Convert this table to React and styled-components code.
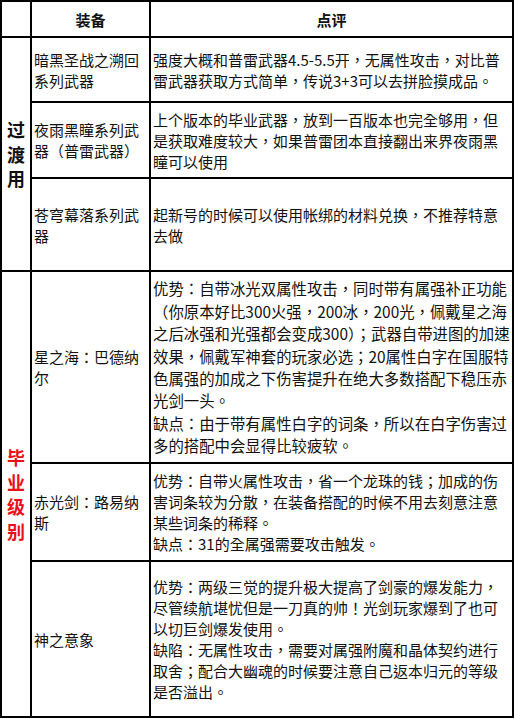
import React from "react";
import styled, { createGlobalStyle } from "styled-components";

const Global = createGlobalStyle`
  html, body {
    margin: 0;
    padding: 0;
    background: #fff;
  }
  body {
    font-family: "Noto Sans CJK TC", "Noto Sans CJK SC", "Noto Sans", sans-serif;
    color: #111;
  }
`;

const Table = styled.table`
  width: 514px;
  table-layout: fixed;
  border-collapse: separate;
  border-spacing: 0;
  border-top: 2px solid #000;
  border-left: 2px solid #000;
  font-size: 15px;
`;

const Row = styled.tr`
  height: ${(p) => p.$h}px;
`;

const Cell = styled.td`
  box-sizing: border-box;
  border-right: 2px solid #000;
  border-bottom: 2px solid #000;
  padding: 0 0 0 2px;
  vertical-align: middle;
  font-size: ${(p) => p.$fs || 15}px;
  line-height: ${(p) => p.$lh || 21}px;
  white-space: nowrap;
  overflow: hidden;
`;

const HeadCell = styled.th`
  box-sizing: border-box;
  width: ${(p) => p.$w}px;
  border-right: 2px solid #000;
  border-bottom: 2px solid #000;
  padding: 0;
  font-size: 15px;
  font-weight: 700;
  text-align: center;
  vertical-align: middle;
`;

const CatCell = styled.td`
  box-sizing: border-box;
  border-right: 2px solid #000;
  border-bottom: 2px solid #000;
  padding: 0;
  text-align: center;
  vertical-align: middle;
  font-size: 18px;
  font-weight: 700;
  line-height: 24.5px;
  color: ${(p) => (p.$red ? "#e8101c" : "#111")};
`;

const groups = [
  {
    name: ["过", "渡", "用"],
    red: false,
    items: [
      {
        h: 65,
        equip: ["暗黑圣战之溯回", "系列武器"],
        note: [
          "强度大概和普雷武器4.5-5.5开，无属性攻击，对比普",
          "雷武器获取方式简单，传说3+3可以去拼脸摸成品。",
        ],
      },
      {
        h: 76,
        equip: ["夜雨黑瞳系列武", "器（普雷武器）"],
        note: [
          "上个版本的毕业武器，放到一百版本也完全够用，但",
          "是获取难度较大，如果普雷团本直接翻出来界夜雨黑",
          "瞳可以使用",
        ],
      },
      {
        h: 93,
        equip: ["苍穹幕落系列武", "器"],
        note: [
          "起新号的时候可以使用帐绑的材料兑换，不推荐特意",
          "去做",
        ],
      },
    ],
  },
  {
    name: ["毕", "业", "级", "别"],
    red: true,
    items: [
      {
        h: 192,
        lh: 22.4,
        fs: 15.4,
        equip: ["星之海：巴德纳", "尔"],
        note: [
          "优势：自带冰光双属性攻击，同时带有属强补正功能",
          "（你原本好比300火强，200冰，200光，佩戴星之海",
          "之后冰强和光强都会变成300）；武器自带进图的加速",
          "效果，佩戴军神套的玩家必选；20属性白字在国服特",
          "色属强的加成之下伤害提升在绝大多数搭配下稳压赤",
          "光剑一头。",
          "缺点：由于带有属性白字的词条，所以在白字伤害过",
          "多的搭配中会显得比较疲软。",
        ],
      },
      {
        h: 98,
        equip: ["赤光剑：路易纳", "斯"],
        note: [
          "优势：自带火属性攻击，省一个龙珠的钱；加成的伤",
          "害词条较为分散，在装备搭配的时候不用去刻意注意",
          "某些词条的稀释。",
          "缺点：31的全属强需要攻击触发。",
        ],
      },
      {
        h: 156,
        equip: ["神之意象"],
        note: [
          "优势：两级三觉的提升极大提高了剑豪的爆发能力，",
          "尽管续航堪忧但是一刀真的帅！光剑玩家爆到了也可",
          "以切巨剑爆发使用。",
          "缺陷：无属性攻击，需要对属强附魔和晶体契约进行",
          "取舍；配合大幽魂的时候要注意自己返本归元的等级",
          "是否溢出。",
        ],
      },
    ],
  },
];

function Lines({ list }) {
  return list.map((t, i) => (
    <React.Fragment key={i}>
      {i > 0 && <br />}
      {t}
    </React.Fragment>
  ));
}

export default function App() {
  return (
    <>
      <Global />
      <Table>
        <tbody>
          <Row $h={36}>
            <HeadCell $w={30}></HeadCell>
            <HeadCell $w={119}>装备</HeadCell>
            <HeadCell $w={363}>点评</HeadCell>
          </Row>
          {groups.map((g) =>
            g.items.map((it, idx) => (
              <Row $h={it.h} key={g.name.join("") + idx}>
                {idx === 0 && (
                  <CatCell rowSpan={g.items.length} $red={g.red}>
                    <Lines list={g.name} />
                  </CatCell>
                )}
                <Cell>
                  <Lines list={it.equip} />
                </Cell>
                <Cell $lh={it.lh} $fs={it.fs}>
                  <Lines list={it.note} />
                </Cell>
              </Row>
            ))
          )}
        </tbody>
      </Table>
    </>
  );
}
